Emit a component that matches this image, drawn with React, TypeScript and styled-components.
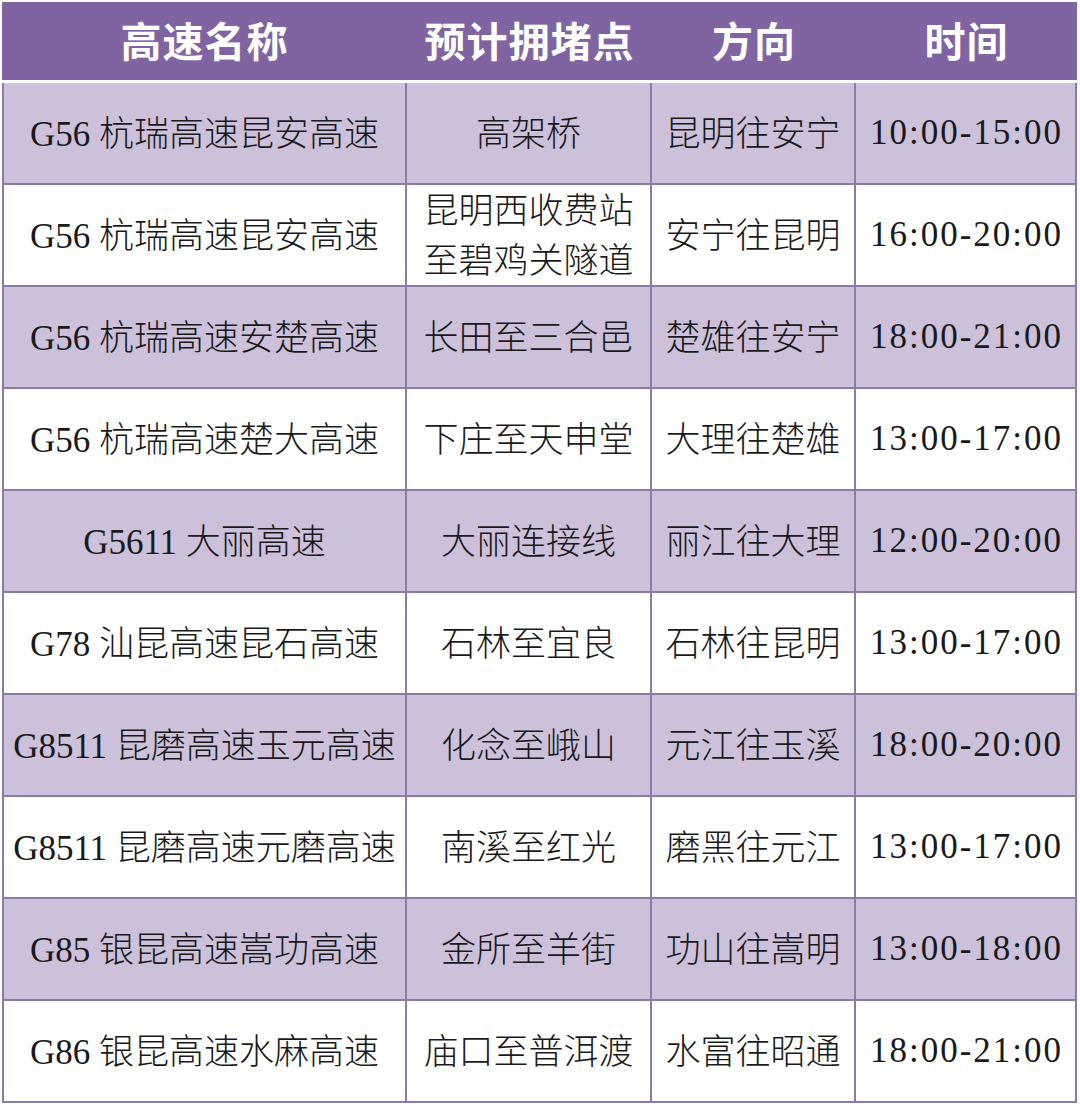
import styled, { createGlobalStyle } from "styled-components";

const GlobalStyle = createGlobalStyle`
  html, body {
    margin: 0;
    padding: 0;
    background: #ffffff;
  }
`;

const Page = styled.div`
  padding: 2px 0 0 2px;
  width: 1080px;
  height: 1107px;
  box-sizing: border-box;
  background: #ffffff;
`;

const Grid = styled.div`
  display: grid;
  grid-template-columns: 405px 245px 204px 221px;
  width: 1075px;
`;

const HeadCell = styled.div`
  height: 81px;
  box-sizing: border-box;
  border-bottom: 3px solid #ffffff;
  background: #8064a2;
  color: #ffffff;
  display: flex;
  align-items: center;
  justify-content: center;
  font-family: "Noto Sans CJK SC", "Noto Sans", sans-serif;
  font-size: 41px;
  font-weight: 700;
  letter-spacing: 1px;
  padding-bottom: 4px;
`;

const Cell = styled.div<{ $shade: boolean; $first: boolean }>`
  height: 102px;
  box-sizing: border-box;
  border-right: 2px solid #8a7ca6;
  border-bottom: 2px solid #8a7ca6;
  border-left: ${(p) => (p.$first ? "2px solid #8a7ca6" : "0")};
  background: ${(p) => (p.$shade ? "#ccc0da" : "#ffffff")};
  display: flex;
  align-items: center;
  justify-content: center;
  text-align: center;
  color: #1a1a1a;
  font-family: "Liberation Serif", "Noto Sans CJK SC", serif;
  font-size: 35px;
  font-weight: 300;
  line-height: 50px;
  white-space: nowrap;
`;

const Lines = styled.span`
  display: block;
  padding-top: 4px;
`;

const Time = styled.span`
  letter-spacing: 2px;
  margin-right: -2px;
`;

const headers = ["高速名称", "预计拥堵点", "方向", "时间"];

const rows = [
  ["G56 杭瑞高速昆安高速", "高架桥", "昆明往安宁", "10:00-15:00"],
  ["G56 杭瑞高速昆安高速", "昆明西收费站\n至碧鸡关隧道", "安宁往昆明", "16:00-20:00"],
  ["G56 杭瑞高速安楚高速", "长田至三合邑", "楚雄往安宁", "18:00-21:00"],
  ["G56 杭瑞高速楚大高速", "下庄至天申堂", "大理往楚雄", "13:00-17:00"],
  ["G5611 大丽高速", "大丽连接线", "丽江往大理", "12:00-20:00"],
  ["G78 汕昆高速昆石高速", "石林至宜良", "石林往昆明", "13:00-17:00"],
  ["G8511 昆磨高速玉元高速", "化念至峨山", "元江往玉溪", "18:00-20:00"],
  ["G8511 昆磨高速元磨高速", "南溪至红光", "磨黑往元江", "13:00-17:00"],
  ["G85 银昆高速嵩功高速", "金所至羊街", "功山往嵩明", "13:00-18:00"],
  ["G86 银昆高速水麻高速", "庙口至普洱渡", "水富往昭通", "18:00-21:00"],
];

export default function App() {
  return (
    <>
      <GlobalStyle />
      <Page>
        <Grid>
          {headers.map((h) => (
            <HeadCell key={h}>{h}</HeadCell>
          ))}
          {rows.map((row, i) =>
            row.map((text, j) => (
              <Cell key={`${i}-${j}`} $shade={i % 2 === 0} $first={j === 0}>
                {j === 3 ? (
                  <Time>{text}</Time>
                ) : (
                  <Lines>
                    {text.split("\n").map((line, k) => (
                      <div key={k}>{line}</div>
                    ))}
                  </Lines>
                )}
              </Cell>
            ))
          )}
        </Grid>
      </Page>
    </>
  );
}
